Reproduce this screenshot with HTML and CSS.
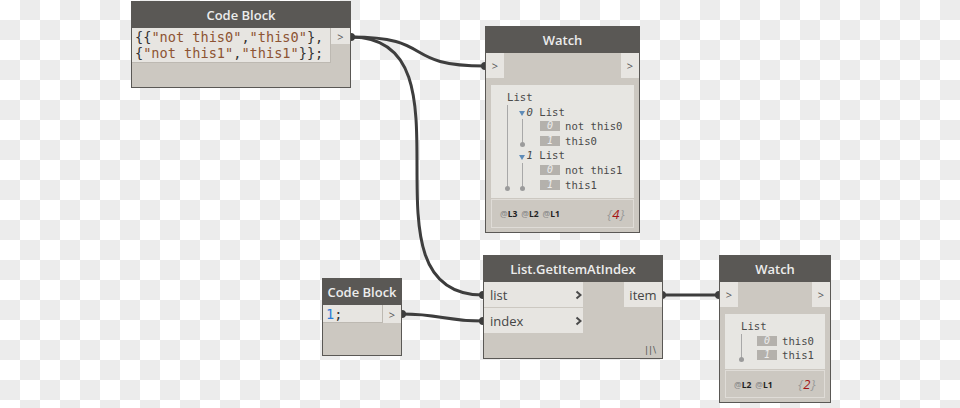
FILE: index.html
```html
<!DOCTYPE html>
<html>
<head>
<meta charset="utf-8">
<title>Dynamo graph</title>
<link rel="stylesheet" href="styles.css">
</head>
<body>
<div class="canvas">
  <svg class="wires" width="960" height="408" viewBox="0 0 960 408">
    <g fill="none" stroke="#3d3d3d" stroke-width="3">
      <path d="M351 37 C 436 37, 400 66, 485 66"/>
      <path d="M351 37 C 483 37, 351 295, 483 295"/>
      <path d="M402 314 C 442 314, 443 321, 483 321"/>
      <path d="M662 295 L 719 295"/>
    </g>
    <g fill="#3d3d3d">
      <circle cx="351" cy="37" r="4"/>
      <circle cx="485" cy="66" r="4"/>
      <circle cx="483" cy="295" r="4"/>
      <circle cx="402" cy="314" r="4"/>
      <circle cx="483" cy="321" r="4"/>
      <circle cx="662" cy="295" r="4"/>
      <circle cx="719" cy="295" r="4"/>
    </g>
  </svg>

  <div class="node cb1">
    <div class="head">Code Block</div>
    <div class="cbrow">
      <div class="code"><div>{{<span class="str">"not this0"</span>,<span class="str">"this0"</span>},</div><div>{<span class="str">"not this1"</span>,<span class="str">"this1"</span>}};</div></div>
      <div class="port pcb1">&gt;</div>
    </div>
  </div>

  <div class="node watch w1">
    <div class="head">Watch</div>
    <div class="ports">
      <div class="port pw">&gt;</div>
      <div class="port pw">&gt;</div>
    </div>
    <div class="panel p1">
      <div class="row">List</div>
      <div class="kids k0">
        <div class="row"><i class="tri"></i><em>0</em> List</div>
        <div class="kids k1">
          <div class="row"><span class="idx">0</span>not this0</div>
          <div class="row"><span class="idx">1</span>this0</div>
        </div>
        <div class="row"><i class="tri"></i><em>1</em> List</div>
        <div class="kids k1">
          <div class="row"><span class="idx">0</span>not this1</div>
          <div class="row"><span class="idx">1</span>this1</div>
        </div>
      </div>
    </div>
    <div class="foot f1">
      <div class="lv"><span><b>@</b>L3</span><span><b>@</b>L2</span><span><b>@</b>L1</span></div>
      <div class="cnt">{<b>4</b>}</div>
    </div>
  </div>

  <div class="node cb2">
    <div class="head">Code Block</div>
    <div class="cbrow">
      <div class="code c2"><span class="num">1</span>;</div>
      <div class="port pcb2">&gt;</div>
    </div>
  </div>

  <div class="node giai">
    <div class="head">List.GetItemAtIndex</div>
    <div class="gbody">
      <div class="ins">
        <div class="in"><span>list</span><svg width="7" height="10" viewBox="0 0 7 10"><path d="M1.5 1.5 L5.5 5 L1.5 8.5" fill="none" stroke="#4a4a4a" stroke-width="2"/></svg></div>
        <div class="in"><span>index</span><svg width="7" height="10" viewBox="0 0 7 10"><path d="M1.5 1.5 L5.5 5 L1.5 8.5" fill="none" stroke="#4a4a4a" stroke-width="2"/></svg></div>
      </div>
      <div class="out">item</div>
    </div>
    <div class="lacing">||\</div>
  </div>

  <div class="node watch w2">
    <div class="head">Watch</div>
    <div class="ports">
      <div class="port pw">&gt;</div>
      <div class="port pw">&gt;</div>
    </div>
    <div class="panel p2">
      <div class="row">List</div>
      <div class="kids k2">
        <div class="row"><span class="idx">0</span>this0</div>
        <div class="row"><span class="idx">1</span>this1</div>
      </div>
    </div>
    <div class="foot f2">
      <div class="lv"><span><b>@</b>L2</span><span><b>@</b>L1</span></div>
      <div class="cnt">{<b>2</b>}</div>
    </div>
  </div>
</div>
</body>
</html>
```

FILE: styles.css
```css
* { box-sizing: border-box; margin: 0; padding: 0; }
body { margin: 0; background: #fff; }

.canvas {
  position: relative;
  width: 960px;
  height: 408px;
  overflow: hidden;
  background: repeating-conic-gradient(#ececec 0 25%, #ffffff 0 50%) 0 0 / 40px 40px;
}
.wires { position: absolute; left: 0; top: 0; }

.node {
  position: absolute;
  display: flex;
  flex-direction: column;
  background: #ccc8c1;
  border: 1px solid #5a5855;
  font-family: "Open Sans", "Noto Sans", sans-serif;
}
.head {
  flex: none;
  height: 26px;
  background: #5a5855;
  color: #ececec;
  font-weight: 600;
  font-size: 13px;
  display: flex;
  align-items: center;
  justify-content: center;
  white-space: nowrap;
}

/* positions on the free canvas */
.cb1 { left: 131px; top: 1px; width: 220px; height: 87px; }
.cb2 { left: 322px; top: 278px; width: 80px; height: 78px; }
.w1 { left: 485px; top: 26px; width: 155px; height: 207px; }
.w2 { left: 719px; top: 255px; width: 112px; height: 148px; }
.giai { left: 483px; top: 255px; width: 180px; height: 104px; }

/* code blocks */
.cbrow { display: flex; align-items: flex-start; }
.code {
  flex: 1;
  background: #e7e5e1;
  border-right: 1px solid #bdb9b2;
  border-bottom: 1px solid #bdb9b2;
  padding: 1px 0 1px 3px;
  font-family: "DejaVu Sans Mono", "Liberation Mono", monospace;
  font-size: 13.6px;
  line-height: 16px;
  color: #333;
  white-space: pre;
}
.code .str { color: #8d5433; }
.code.c2 { height: 18px; line-height: 17px; padding-left: 3px; }
.num { color: #2a7ad6; }

.port {
  flex: none;
  background: #e7e5e1;
  color: #555;
  font-size: 11px;
  display: flex;
  align-items: center;
  justify-content: center;
}
.pcb1 { width: 19px; height: 16px; }
.pcb2 { width: 18px; height: 18px; }
.pw { width: 18px; height: 25px; }

/* watch nodes */
.ports { display: flex; justify-content: space-between; flex: none; }
.panel {
  flex: none;
  margin: 7px 5px 0;
  background: #e7e6e2;
  padding: 5px 0 0 16px;
  font-family: "DejaVu Sans Mono", "Liberation Mono", monospace;
  font-size: 10.6px;
  color: #4a4a4a;
}
.p1 { height: 113px; }
.p2 { height: 55px; }
.row {
  height: 14.6px;
  line-height: 14.6px;
  display: flex;
  align-items: center;
  white-space: pre;
}
.kids { position: relative; }
.kids::before {
  content: "";
  position: absolute;
  left: 0;
  top: 0;
  bottom: 3.5px;
  width: 1px;
  background: #a8a8a8;
}
.kids::after {
  content: "";
  position: absolute;
  left: -2px;
  bottom: 1px;
  width: 5px;
  height: 5px;
  border-radius: 50%;
  background: #9b9b9b;
}
.k0 { padding-left: 12px; }
.k1 { margin-left: 3px; padding-left: 18px; }
.k2 { padding-left: 16px; }
.tri {
  display: inline-block;
  width: 0;
  height: 0;
  border-left: 3.5px solid transparent;
  border-right: 3.5px solid transparent;
  border-top: 5px solid #5f8cb8;
  margin: 3px 1.5px 0 0;
}
.row em { font-style: italic; }
.idx {
  display: inline-flex;
  align-items: center;
  justify-content: center;
  width: 20px;
  height: 10px;
  margin-right: 5px;
  background: #b4b1ac;
  color: #ececec;
  font-style: italic;
  font-size: 10px;
  line-height: 10px;
}

.foot {
  flex: none;
  margin: 1px 5px 0;
  border: 1px solid #dfdcd7;
  display: flex;
  align-items: center;
  justify-content: space-between;
  padding: 0 8px 0 8px;
}
.f1 { height: 29px; }
.f2 { height: 28px; }
.lv {
  display: flex;
  gap: 4px;
  font-size: 8.5px;
  font-weight: 700;
  color: #222;
}
.lv b { color: #8e8e8e; font-weight: 600; }
.cnt {
  font-style: italic;
  font-size: 13px;
  color: #9a9a9a;
  letter-spacing: 0.5px;
}
.cnt b { color: #a31414; font-weight: 400; }

/* List.GetItemAtIndex */
.gbody { display: flex; justify-content: space-between; align-items: flex-start; flex: none; }
.ins { width: 99px; display: flex; flex-direction: column; gap: 1px; }
.in {
  height: 25px;
  background: #e7e5e1;
  display: flex;
  align-items: center;
  justify-content: space-between;
  padding: 0 1px 0 6px;
  font-size: 13px;
  color: #454545;
}
.in svg { display: block; }
.out {
  width: 38px;
  height: 25px;
  background: #e7e5e1;
  display: flex;
  align-items: center;
  justify-content: center;
  font-size: 13px;
  color: #454545;
}
.lacing {
  margin-top: auto;
  align-self: flex-end;
  padding: 0 5px 3px 0;
  font-size: 9px;
  letter-spacing: 1px;
  color: #555;
  font-family: "DejaVu Sans", sans-serif;
}
```
